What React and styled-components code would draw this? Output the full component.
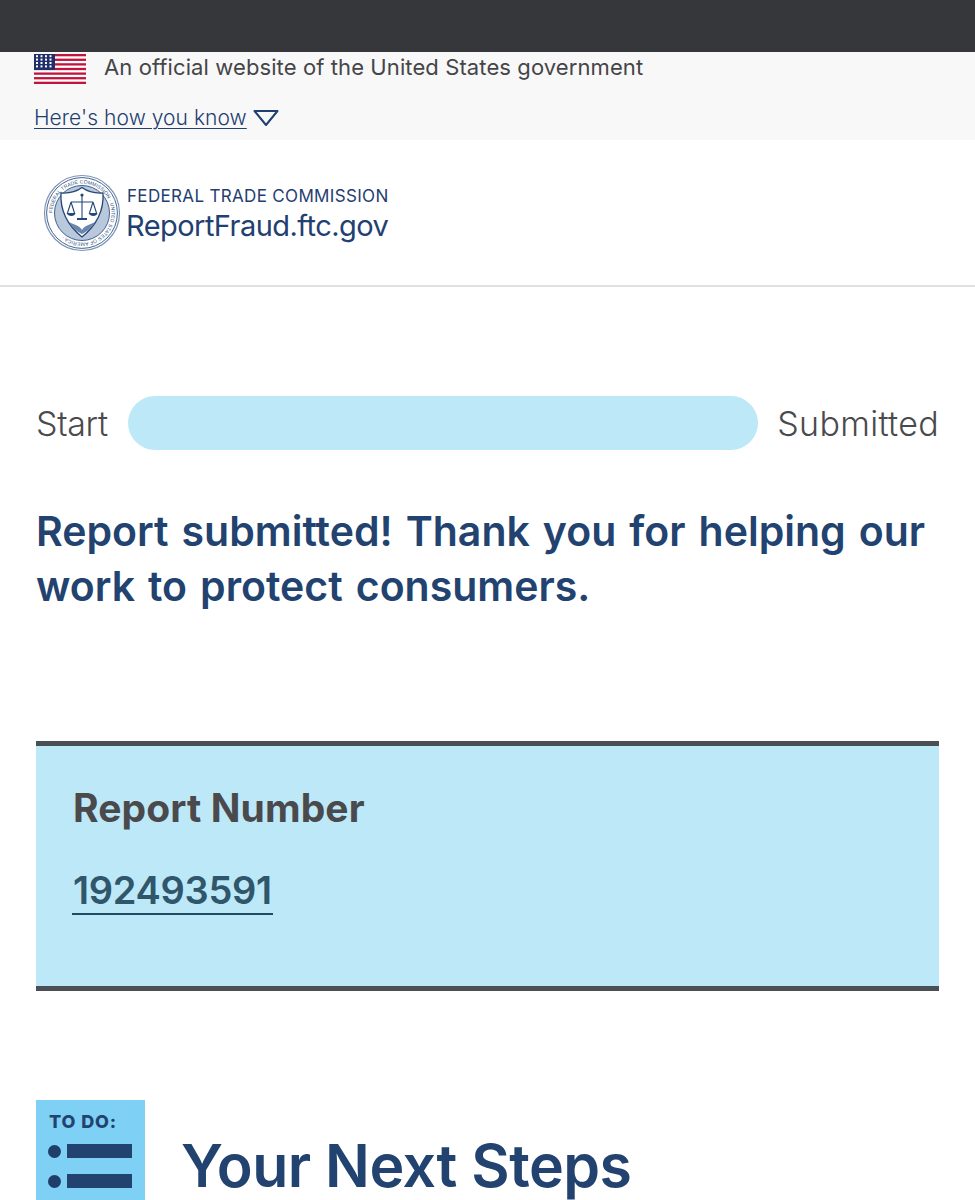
import React from "react";
import styled, { createGlobalStyle } from "styled-components";

const GlobalStyle = createGlobalStyle`
  html, body {
    margin: 0;
    padding: 0;
    background: #ffffff;
  }
  * {
    box-sizing: border-box;
  }
`;

const Page = styled.div`
  width: 975px;
  height: 1200px;
  overflow: hidden;
  font-family: "Inter", "Liberation Sans", sans-serif;
  color: #4a4a4d;
`;

const TopBar = styled.div`
  height: 52px;
  background: #36373a;
`;

const Banner = styled.div`
  height: 88px;
  background: #f8f8f8;
  padding: 2px 34px 0;
`;

const BannerRow = styled.div`
  display: flex;
  align-items: center;
  gap: 18px;
  height: 30px;
`;

const Official = styled.span`
  font-size: 22px;
  line-height: 26px;
  letter-spacing: 0.1px;
  color: #454548;
  padding-bottom: 4px;
`;

const KnowRow = styled.div`
  display: flex;
  align-items: center;
  gap: 6px;
  margin-top: 21px;
`;

const KnowLink = styled.a`
  font-size: 21px;
  font-weight: 300;
  letter-spacing: 0.05px;
  color: #1f4071;
  text-decoration: underline;
  text-underline-offset: 3px;
  text-decoration-thickness: 1px;
`;

const Header = styled.header`
  height: 147px;
  border-bottom: 2px solid #dfe1e2;
  display: flex;
  align-items: center;
  gap: 6px;
  padding: 0 0 0 43px;
  margin-bottom: 109px;
`;

const Brand = styled.div`
  display: flex;
  flex-direction: column;
  color: #1f4071;
  margin-top: 3px;
`;

const Agency = styled.span`
  font-size: 17px;
  line-height: 23px;
  letter-spacing: 0.33px;
`;

const Site = styled.span`
  font-size: 29px;
  line-height: 36px;
  letter-spacing: -0.55px;
  margin-left: -1px;
`;

const Progress = styled.div`
  display: grid;
  grid-template-columns: 92px 630px 1fr;
  align-items: center;
  padding: 0 36px;
`;

const ProgressLabel = styled.span`
  font-size: 34px;
  font-weight: 300;
  letter-spacing: ${(p) => p.$tracking}px;
  text-align: ${(p) => p.$align};
  color: #4a4a4d;
`;

const Track = styled.div`
  height: 54px;
  border-radius: 27px;
  background: #bde8f8;
`;

const Thanks = styled.h1`
  margin: 54px 36px 0;
  font-size: 41px;
  line-height: 55px;
  font-weight: 600;
  color: #224370;
  word-spacing: 2.7px;
`;

const ReportBox = styled.section`
  height: 250px;
  margin: 127px 36px 0;
  padding: 38px 37px 0;
  background: #bde8f8;
  border-top: 5px solid #4a4e55;
  border-bottom: 5px solid #4a4e55;
`;

const ReportTitle = styled.h2`
  margin: 0;
  font-size: 39px;
  line-height: 48px;
  font-weight: 700;
  letter-spacing: 0.1px;
  color: #4a4a4d;
`;

const ReportNumber = styled.a`
  display: inline-block;
  margin: 36px 0 0 -1px;
  padding: 0 1px;
  font-size: 38px;
  line-height: 45px;
  font-weight: 600;
  letter-spacing: -0.3px;
  color: #30566b;
  border-bottom: 2px solid #1f4a60;
`;

const NextSteps = styled.div`
  display: flex;
  align-items: flex-start;
  gap: 36px;
  margin: 109px 36px 0;
`;

const TodoCard = styled.div`
  flex: none;
  width: 109px;
  height: 110px;
  background: #7fd0f5;
  padding: 13px 13px 0;
  color: #224370;
`;

const TodoLabel = styled.div`
  font-size: 18px;
  line-height: 18px;
  font-weight: 800;
  letter-spacing: 0.9px;
  margin-bottom: 13px;
`;

const TodoItem = styled.div`
  display: flex;
  align-items: center;
  gap: 6px;
  height: 14px;
  margin-bottom: 16px;
  margin-left: -1px;
`;

const TodoDot = styled.span`
  width: 13px;
  height: 13px;
  border-radius: 50%;
  background: #1f3f6a;
`;

const TodoBar = styled.span`
  width: 66px;
  height: 14px;
  background: #224370;
`;

const NextTitle = styled.h2`
  margin: 28px 0 0;
  font-size: 59px;
  line-height: 76px;
  font-weight: 600;
  color: #224370;
  letter-spacing: -0.5px;
`;

const Flag = () => (
  <svg width="52" height="30" viewBox="0 0 52 30">
    <rect width="52" height="30" fill="#ffffff" />
    {[0, 2, 4, 6, 8, 10, 12].map((n) => (
      <rect key={n} y={(n * 30) / 13} width="52" height={30 / 13} fill="#c0143c" />
    ))}
    <rect width="21" height="16" fill="#1f2f6b" />
    {[2.2, 5.6, 9, 12.4].map((y) =>
      [3, 7.5, 12, 16.5].map((x) => (
        <rect key={`${x}-${y}`} x={x - 1} y={y - 1} width="2" height="2" fill="#ffffff" />
      ))
    )}
  </svg>
);

const Chevron = () => (
  <svg width="26" height="18" viewBox="0 0 26 18">
    <path d="M1.5 2 H24.5 L13 16 Z" fill="none" stroke="#1f4071" strokeWidth="2" strokeLinejoin="round" />
  </svg>
);

const Seal = () => (
  <svg width="78" height="78" viewBox="0 0 78 78">
    <defs>
      <path id="sealRing" d="M39 39 m-29.5 0 a29.5 29.5 0 1 1 59 0 a29.5 29.5 0 1 1 -59 0" />
    </defs>
    <circle cx="39" cy="39" r="37.5" fill="#ffffff" stroke="#7d95b4" strokeWidth="1.2" />
    <circle cx="39" cy="39" r="35.4" fill="none" stroke="#2f5283" strokeWidth="0.9" />
    <text fontFamily="Liberation Sans, sans-serif" fontSize="5" fill="#2f5283" letterSpacing="0.1">
      <textPath href="#sealRing">FEDERAL TRADE COMMISSION · UNITED STATES OF AMERICA ·</textPath>
    </text>
    <circle cx="39" cy="39" r="27.5" fill="#b9c8da" stroke="#2f5283" strokeWidth="0.9" />
    <path d="M39 13.5 C45 18 52 19.5 60 19 C61 36 55 50 39 63 C23 50 17 36 18 19 C26 19.5 33 18 39 13.5 Z" fill="#ffffff" stroke="#24477a" strokeWidth="1.3" />
    <path d="M39 21 V44 M28 28 H50 M28 28 L24.5 39 M28 28 L31.5 39 M50 28 L46.5 39 M50 28 L53.5 39" fill="none" stroke="#24477a" strokeWidth="1.1" />
    <circle cx="39" cy="21" r="1.6" fill="#24477a" />
    <path d="M23.5 39 H32.5 C32 43 25 43 23.5 39 Z M45.5 39 H54.5 C54 43 47 43 45.5 39 Z M34 44 H44 V46 H34 Z" fill="#24477a" />
    <path d="M26 48 C31 51 36 51 39 56 C42 51 47 51 52 48 C48 55 43 58 39 60 C35 58 30 55 26 48 Z" fill="#6a87ab" />
  </svg>
);

class App extends React.Component {
  render() {
    return (
      <Page>
        <GlobalStyle />
        <TopBar />
        <Banner>
          <BannerRow>
            <Flag />
            <Official>An official website of the United States government</Official>
          </BannerRow>
          <KnowRow>
            <KnowLink>Here's how you know</KnowLink>
            <Chevron />
          </KnowRow>
        </Banner>
        <Header>
          <Seal />
          <Brand>
            <Agency>FEDERAL TRADE COMMISSION</Agency>
            <Site>ReportFraud.ftc.gov</Site>
          </Brand>
        </Header>
        <Progress>
          <ProgressLabel $tracking={-0.3} $align="left">Start</ProgressLabel>
          <Track />
          <ProgressLabel $tracking={0.3} $align="right">Submitted</ProgressLabel>
        </Progress>
        <Thanks>Report submitted! Thank you for helping our work to protect consumers.</Thanks>
        <ReportBox>
          <ReportTitle>Report Number</ReportTitle>
          <ReportNumber>192493591</ReportNumber>
        </ReportBox>
        <NextSteps>
          <TodoCard>
            <TodoLabel>TO DO:</TodoLabel>
            <TodoItem>
              <TodoDot />
              <TodoBar />
            </TodoItem>
            <TodoItem>
              <TodoDot />
              <TodoBar />
            </TodoItem>
          </TodoCard>
          <NextTitle>Your Next Steps</NextTitle>
        </NextSteps>
      </Page>
    );
  }
}

export default App;
